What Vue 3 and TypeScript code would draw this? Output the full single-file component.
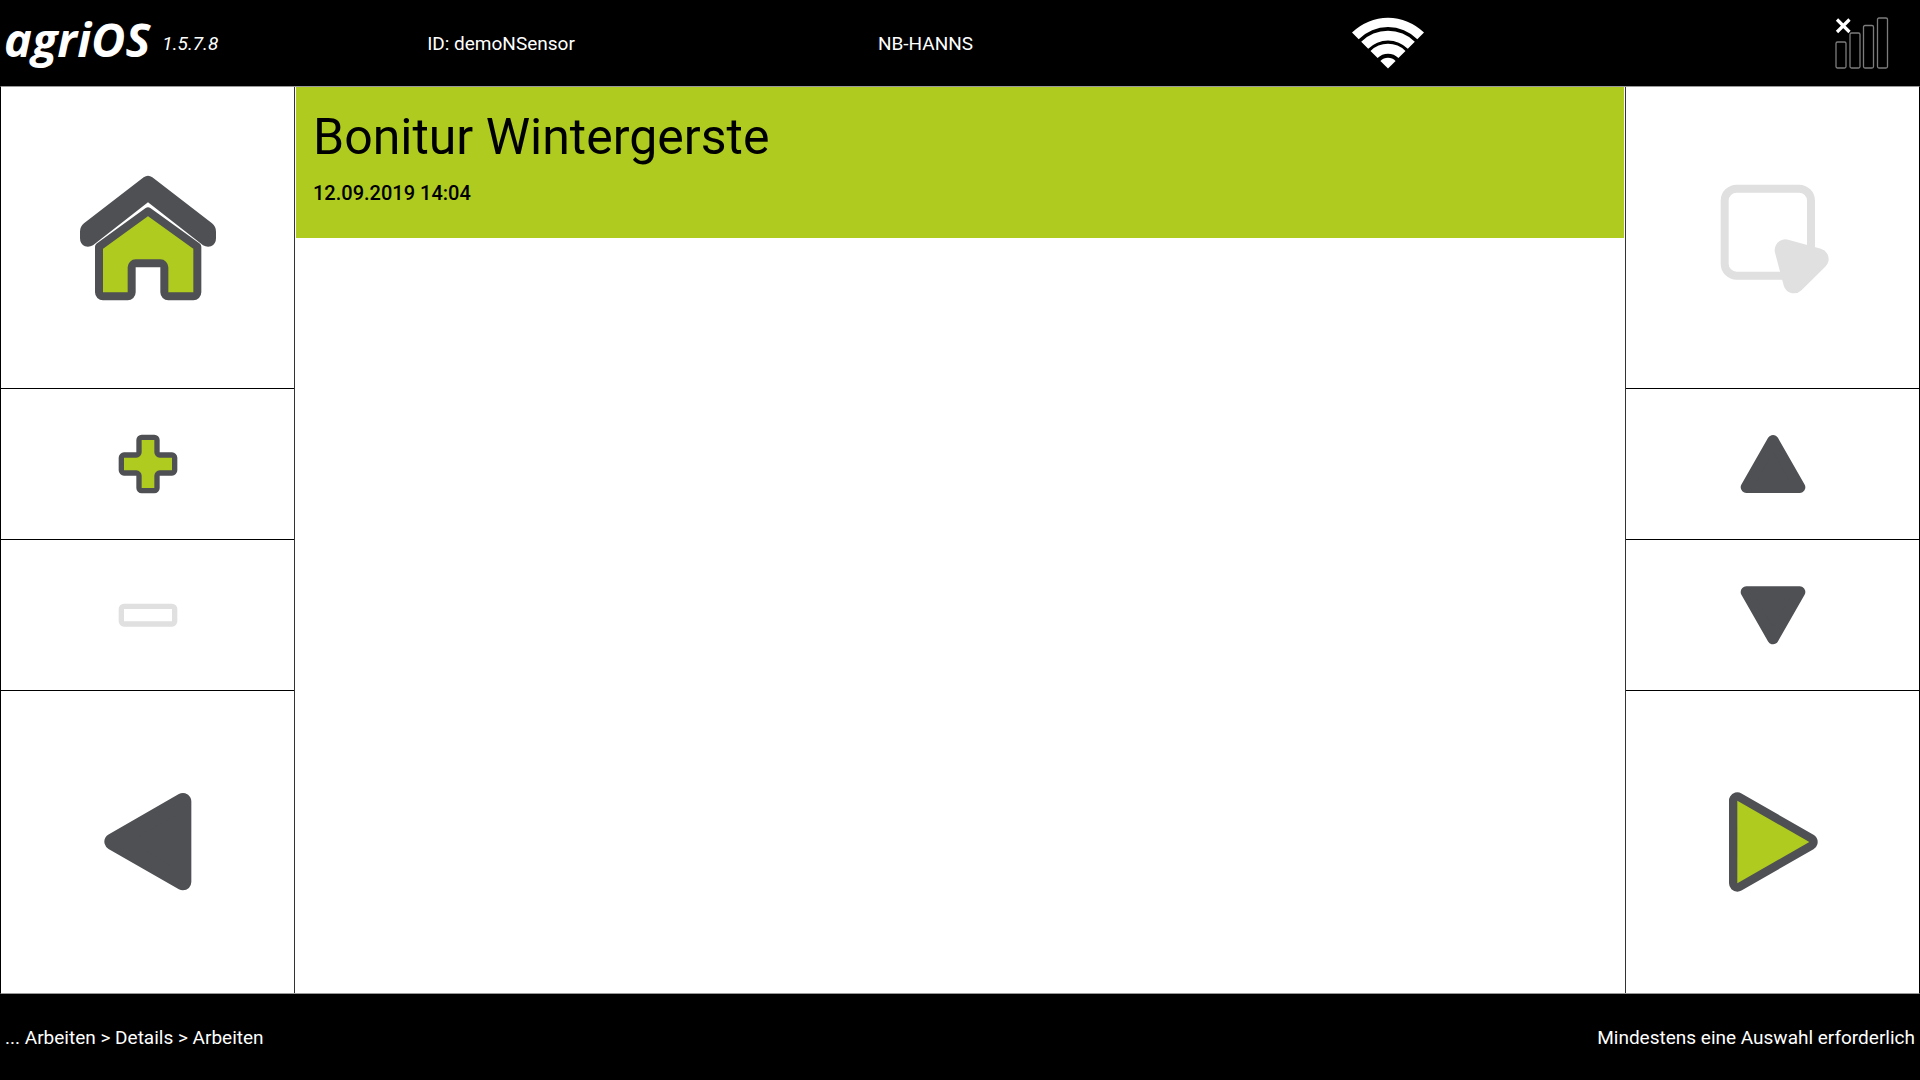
<script setup lang="ts">
import { ref } from 'vue'

interface Job {
  id: number
  title: string
  date: string
}

const version = '1.5.7.8'
const deviceId = 'ID: demoNSensor'
const host = 'NB-HANNS'
const path = '... Arbeiten > Details > Arbeiten'
const hint = 'Mindestens eine Auswahl erforderlich'

const jobs = ref<Job[]>([{ id: 1, title: 'Bonitur Wintergerste', date: '12.09.2019 14:04' }])
const selected = ref<number>(1)
</script>

<template>
  <div class="screen">
    <header class="topbar">
      <div class="brand">
        <span class="logo">agriOS</span>
        <span class="version">{{ version }}</span>
      </div>
      <span class="info">{{ deviceId }}</span>
      <span class="info">{{ host }}</span>
      <div class="wifi">
        <svg width="72" height="52" viewBox="0 0 72 52" fill="#fff" role="img" aria-label="WLAN">
          <path d="M0 15.5A51.5 51.5 0 0 1 72 15.5L65.3 22.2A41.5 41.5 0 0 0 6.7 22.2Z" />
          <path d="M9.2 24.7A38 38 0 0 1 62.8 24.7L55.8 31.7A28 28 0 0 0 16.2 31.7Z" />
          <path d="M18.5 34A24.7 24.7 0 0 1 53.5 34L46.4 41.1A14.7 14.7 0 0 0 25.6 41.1Z" />
          <path d="M28.4 43.9A10.7 10.7 0 0 1 43.6 43.9L36 51.5Z" />
        </svg>
      </div>
      <div class="signal">
        <svg width="54" height="52" viewBox="0 0 54 52" fill="none" role="img" aria-label="Kein Mobilfunk">
          <g stroke="#7c7c7c" stroke-width="1.3">
            <rect x="1" y="25" width="10" height="26" rx="1.5" />
            <rect x="15" y="16" width="10" height="35" rx="1.5" />
            <rect x="28.5" y="8.5" width="10" height="42.5" rx="1.5" />
            <rect x="42.500" y="1" width="10" height="50" rx="1.5" />
          </g>
          <path d="M2 2.5L14.500 15M14.500 2.500L2 15" stroke="#fff" stroke-width="3.2" />
        </svg>
      </div>
    </header>

    <main class="work">
      <nav class="keys" aria-label="Aktionen links">
        <button type="button" class="key" aria-label="Startseite">
          <svg width="138" height="126" viewBox="56 43 414 378">
            <path
              d="M250 50Q263 41 276 50L455 188Q467 198 467 213V233Q467 250 452 257Q440 261 428 254L263 125L98 254Q86 261 74 257Q59 250 59 233V213Q59 198 71 188Z"
              fill="#4f5054"
            />
            <path
              d="M263 152L411 258V395A12 12 0 0 1 399 407H324A12 12 0 0 1 312 395V320A12 12 0 0 0 300 308H226A12 12 0 0 0 214 320V395A12 12 0 0 1 202 407H128A12 12 0 0 1 116 395V258Z"
              fill="#afcb1f" stroke="#4f5054" stroke-width="24" stroke-linejoin="round"
            />
          </svg>
        </button>
        <button type="button" class="key" aria-label="Hinzufügen">
          <svg width="60" height="60" viewBox="83 73 180 180">
            <path
              d="M154 83H192A8 8 0 0 1 200 91V128A8 8 0 0 0 208 136H245A8 8 0 0 1 253 144V182A8 8 0 0 1 245 190H208A8 8 0 0 0 200 198V235A8 8 0 0 1 192 243H154A8 8 0 0 1 146 235V198A8 8 0 0 0 138 190H101A8 8 0 0 1 93 182V144A8 8 0 0 1 101 136H138A8 8 0 0 0 146 128V91A8 8 0 0 1 154 83Z"
              fill="#afcb1f" stroke="#4f5054" stroke-width="16"
            />
          </svg>
        </button>
        <button type="button" class="key" aria-label="Entfernen" disabled>
          <svg width="60" height="60" viewBox="83 526 180 180">
            <rect x="93" y="590" width="160" height="53" rx="8" fill="none" stroke="#e0e0e0" stroke-width="16" />
          </svg>
        </button>
        <button type="button" class="key" aria-label="Zurück">
          <svg width="88" height="100" viewBox="71 66 264 300">
            <path d="M97 215L308 94V336Z" fill="#4f5054" stroke="#4f5054" stroke-width="50" stroke-linejoin="round" />
          </svg>
        </button>
      </nav>

      <section class="list" aria-label="Arbeiten">
        <button
          v-for="job in jobs"
          :key="job.id"
          type="button"
          class="job"
          :class="{ active: job.id === selected }"
          @click="selected = job.id"
        >
          <span class="title">{{ job.title }}</span>
          <span class="date">{{ job.date }}</span>
        </button>
      </section>

      <nav class="keys right" aria-label="Aktionen rechts">
        <button type="button" class="key" aria-label="Auswählen" disabled>
          <svg width="114" height="112" viewBox="76 64 342 336">
            <rect x="102" y="84" width="259" height="261" rx="36" fill="none" stroke="#e0e0e0" stroke-width="24" />
            <path d="M284 268L382 295L310 366Z" fill="#e0e0e0" stroke="#e0e0e0" stroke-width="64" stroke-linejoin="round" />
          </svg>
        </button>
        <button type="button" class="key" aria-label="Nach oben">
          <svg width="66" height="60" viewBox="88 72 198 180">
            <path d="M187 92L267 232H107Z" fill="#4f5054" stroke="#4f5054" stroke-width="34" stroke-linejoin="round" />
          </svg>
        </button>
        <button type="button" class="key" aria-label="Nach unten">
          <svg width="66" height="60" viewBox="88 525 198 180">
            <path d="M187 686L267 546H107Z" fill="#4f5054" stroke="#4f5054" stroke-width="34" stroke-linejoin="round" />
          </svg>
        </button>
        <button type="button" class="key" aria-label="Weiter">
          <svg width="90" height="102" viewBox="382 63 270 306">
            <path d="M410 92V340L626 216Z" fill="#4f5054" stroke="#4f5054" stroke-width="50" stroke-linejoin="round" />
            <path d="M410 92V340L626 216Z" fill="#afcb1f" />
          </svg>
        </button>
      </nav>
    </main>

    <footer class="bottombar">
      <span>{{ path }}</span>
      <span>{{ hint }}</span>
    </footer>
  </div>
</template>

<style>
body {
  margin: 0;
  background: #000;
}
</style>

<style scoped>
.screen {
  display: flex;
  flex-direction: column;
  min-height: 100vh;
  background: #000;
  color: #fff;
  font-family: Roboto, "Noto Sans", sans-serif;
  font-size: 19px;
  line-height: 24px;
}

.topbar {
  display: grid;
  grid-template-columns: 289fr 424fr 425fr 500fr 282fr;
  align-items: center;
  height: 86px;
}

.brand {
  display: flex;
  align-items: center;
  gap: 12px;
  padding-left: 4px;
}

.logo {
  padding-bottom: 8px;
  font-family: "Open Sans", "Noto Sans", sans-serif;
  font-size: 47px;
  font-weight: 700;
  font-style: italic;
  line-height: 64px;
}

.version {
  padding-top: 2px;
  font-style: italic;
}

.info {
  padding-top: 2px;
  text-align: center;
}

.wifi {
  display: flex;
  justify-content: center;
}

.signal {
  display: flex;
  justify-content: flex-end;
  padding-right: 31px;
}

.work {
  display: grid;
  grid-template-columns: 294fr 1330fr 294fr;
  flex: 1;
  background: #fff;
  border: 1px solid #000;
  border-top-color: #999;
  border-bottom-color: #999;
}

.keys {
  display: grid;
  grid-template-rows: 2fr 1fr 1fr 2fr;
  border-right: 1px solid #333;
}

.keys.right {
  border-right: 0;
  border-left: 1px solid #333;
}

.key {
  display: flex;
  align-items: center;
  justify-content: center;
  padding: 0;
  border: 0;
  border-bottom: 1px solid #000;
  background: #fff;
}

.key:last-child {
  border-bottom: 0;
}

.list {
  padding: 0 1px;
}

.job {
  display: flex;
  flex-direction: column;
  width: 100%;
  height: 151px;
  padding: 20px 17px;
  border: 0;
  background: #fff;
  color: #000;
  font-family: inherit;
  text-align: left;
}

.job.active {
  background: #afcb1f;
}

.title {
  font-size: 50px;
  line-height: 60px;
}

.date {
  margin-top: 14px;
  font-size: 20px;
  font-weight: 500;
  line-height: 24px;
}

.bottombar {
  display: flex;
  align-items: center;
  justify-content: space-between;
  height: 86px;
  padding: 2px 5px 0;
  box-sizing: border-box;
}
</style>
